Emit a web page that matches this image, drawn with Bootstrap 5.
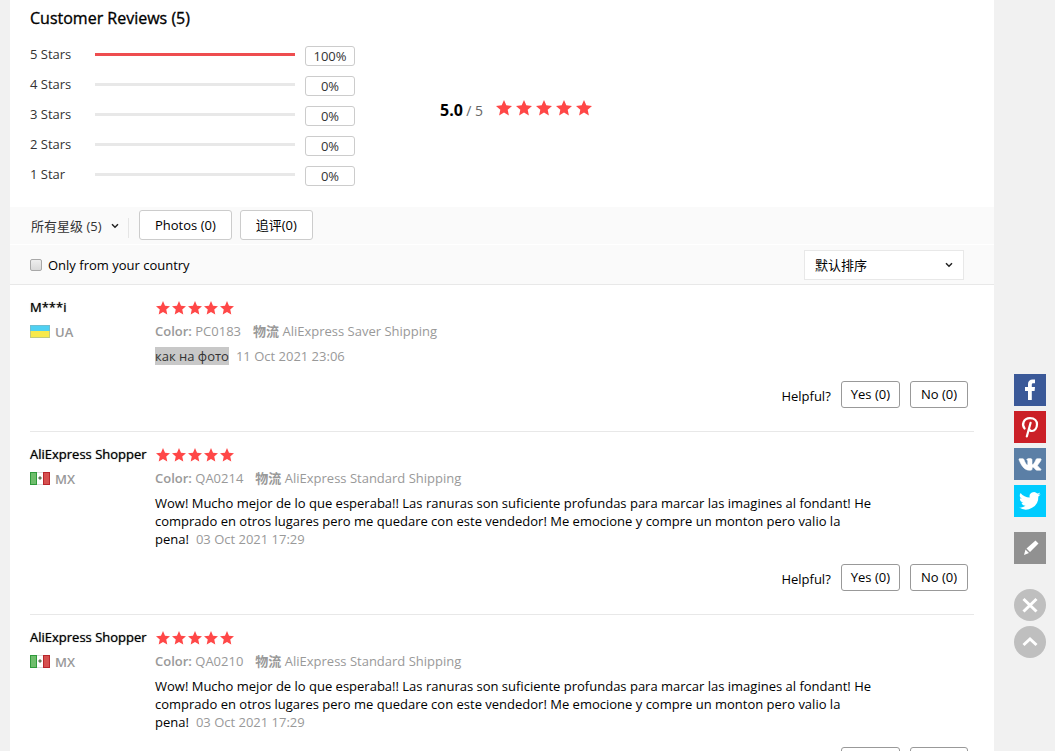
<!DOCTYPE html>
<html lang="en">
<head>
<meta charset="utf-8">
<meta name="viewport" content="width=device-width, initial-scale=1">
<title>Customer Reviews</title>
<link href="https://cdn.jsdelivr.net/npm/bootstrap@5.3.0/dist/css/bootstrap.min.css" rel="stylesheet">
<style>
  body { background: #f1f1f1; color: #000; font: 400 13px/18px "Open Sans", "Noto Sans CJK SC", sans-serif; }
  .page-wrap { padding: 0 61px 0 10px; }
  .reviews-title { font-size: 16px; line-height: 24px; font-weight: 400; -webkit-text-stroke: thin; padding-top: 6px; margin-bottom: 9px; }
  .summary { padding-bottom: 18px; }
  .rate-row { height: 30px; color: #333; }
  .rate-label { width: 65px; }
  .rate-bar { width: 200px; height: 3px; border-radius: 0; background: #e8e8e8; margin-right: 10px; }
  .rate-bar .progress-bar { background: #ee4d4f; }
  .rate-num { width: 50px; height: 20px; border: 1px solid #ccc; border-radius: 3px; margin-top: 4px; line-height: 19px; }
  .score { margin-left: 85px; padding-bottom: 12px; }
  .score-value { font-size: 16px; font-weight: 700; }
  .score-max { color: #666; font-size: 14px; margin-right: 1px; }
  .stars { display: block; fill: #ff4747; }
  .filters { background: #fafafa; border-bottom: 1px solid #e8e8e8; padding: 0 30px 0 20px; }
  .filter-top { height: 37px; padding-top: 3px; }
  .filter-bottom { height: 39px; }
  .filter-line { height: 1px; margin: 0 -30px 0 -20px; background: #fff; }
  .plain-select { appearance: none; border-radius: 0; color: #333; font-size: 13px;
    background: url("data:image/svg+xml,%3Csvg xmlns='http://www.w3.org/2000/svg' viewBox='0 0 8 6'%3E%3Cpath d='M1 1.2 4 4.2 7 1.2' fill='none' stroke='%23222' stroke-width='1.5'/%3E%3C/svg%3E") no-repeat right center / 8px 6px; }
  .star-select { width: 89px; height: 32px; border: 0; padding: 0 12px 0 1px; }
  .sort-select { width: 160px; height: 30px; border: 1px solid #e8e8e8; padding: 0 24px 0 10px; color: #000; background-color: #fff; background-position: right 10px center; }
  .split { width: 1px; height: 20px; background: #e5e5e5; margin: 0 10px 0 9px; }
  .filter-btn { height: 30px; padding: 0 15px; border: 1px solid #ccc; border-radius: 3px; background: #fff; font-size: 13px; line-height: 28px; color: #000; }
  .country-check { appearance: none; width: 12px; height: 12px; margin: 0 6px 0 0; border: 1px solid #a8a8a8; border-radius: 2px; background: linear-gradient(#eee, #d9d9d9); }
  .country-check:checked { background: #777; }
  .feedback { margin: 0 20px; padding: 15px 0 23px; border-bottom: 1px solid #e8e8e8; }
  .buyer { width: 125px; flex: none; }
  .buyer-name { line-height: 14px; font-weight: 500; text-shadow: 0 0 1px #555; white-space: nowrap; }
  .buyer-country { margin-top: 8px; color: #999; font-weight: 600; line-height: 20px; }
  .flag { margin-right: 5px; margin-bottom: 2px; }
  .star-line { height: 16px; padding: 1px 0 0 1px; }
  .meta { margin-top: 6px; color: #999; }
  .meta b { font-weight: 600; }
  .comment-text { margin: 7px 0 0; max-width: 719px; }
  .picked { background: #c8c8c8; color: #333; display: inline-block; }
  .date { color: #999; margin-left: 7px; }
  .helpful { margin-top: 16px; padding-right: 6px; gap: 10px; }
  .helpful span { padding-top: 2px; }
  .vote-btn { height: 27px; min-width: 58px; padding: 0 9px; border: 1px solid #999; border-radius: 3px; background: #fff; font-size: 13px; line-height: 25px; color: #000; }
  .share-bar { right: 9px; bottom: 93px; gap: 5px; }
  .share-bar a, .share-bar button { display: block; width: 32px; height: 32px; border: 0; padding: 0; }
  .share-bar svg { display: block; }
  .fb { background: #3b5998; } .pin { background: #cb2027; } .vk { background: #5b7fa6; } .tw { background: #00ccff; }
  .pen { background: #919191; margin: 10px 0 20px; }
  .round { border-radius: 50%; background: #bfbfbf; }
</style>
</head>
<body>
<svg class="d-none">
  <symbol id="star" viewBox="0 0 16 16"><path d="M8 0 10.300 5.300 16 5.900 11.700 9.700 12.900 15.500 8 12.500 3.100 15.500 4.300 9.700 0 5.900 5.700 5.300Z"/></symbol>
  <symbol id="mx" viewBox="0 0 20 13"><path fill="#fff" d="M0 0h20v13H0z"/><path fill="#2f9a3b" d="M0 0h7v13H0z"/><path fill="#6fbd6c" d="M1 1h5v11H1z"/><path fill="#b8262c" d="M13 0h7v13h-7z"/><path fill="#d6504f" d="M14 1h5v11h-5z"/><path fill="#62795a" d="M8.500 5.500 10 4l1.500 1.500v1L10 8 8.500 6.500z"/><path fill="#ddd" d="M7 0h6v1H7zM7 12h6v1H7z"/></symbol>
  <symbol id="ua" viewBox="0 0 20 13"><path fill="#4fd0f2" d="M0 0h20v6H0z"/><path fill="#f8e94c" d="M0 6h20v7H0z"/><path fill="none" stroke="#8cabb0" stroke-opacity=".5" d="M.5.5h19v12H.5z"/></symbol>
  <symbol id="stars-s" viewBox="0 0 78 14"><use href="#star" x="0" y="0" width="14" height="14"/><use href="#star" x="16" y="0" width="14" height="14"/><use href="#star" x="32" y="0" width="14" height="14"/><use href="#star" x="48" y="0" width="14" height="14"/><use href="#star" x="64" y="0" width="14" height="14"/></symbol>
</svg>

<div class="page-wrap">
<main class="bg-white">
  <section class="summary px-3 mx-1">
    <h1 class="reviews-title">Customer Reviews (5)</h1>
    <div class="d-flex align-items-center">
      <div>
        <div class="rate-row d-flex align-items-center"><span class="rate-label">5 Stars</span><div class="progress rate-bar"><div class="progress-bar" style="width:100%"></div></div><span class="rate-num text-center">100%</span></div>
        <div class="rate-row d-flex align-items-center"><span class="rate-label">4 Stars</span><div class="progress rate-bar"><div class="progress-bar" style="width:0%"></div></div><span class="rate-num text-center">0%</span></div>
        <div class="rate-row d-flex align-items-center"><span class="rate-label">3 Stars</span><div class="progress rate-bar"><div class="progress-bar" style="width:0%"></div></div><span class="rate-num text-center">0%</span></div>
        <div class="rate-row d-flex align-items-center"><span class="rate-label">2 Stars</span><div class="progress rate-bar"><div class="progress-bar" style="width:0%"></div></div><span class="rate-num text-center">0%</span></div>
        <div class="rate-row d-flex align-items-center"><span class="rate-label">1 Star</span><div class="progress rate-bar"><div class="progress-bar" style="width:0%"></div></div><span class="rate-num text-center">0%</span></div>
      </div>
      <div class="score d-flex align-items-center">
        <div class="pt-1"><span class="score-value">5.0</span> <span class="score-max">/ 5</span></div>
        <svg class="stars ms-2 ps-1" width="101" height="16" viewBox="0 0 97 16" role="img" aria-label="5 stars"><use href="#star" width="16" height="16"/><use href="#star" x="20" width="16" height="16"/><use href="#star" x="40" width="16" height="16"/><use href="#star" x="60" width="16" height="16"/><use href="#star" x="80" width="16" height="16"/></svg>
      </div>
    </div>
  </section>

  <section class="filters">
    <div class="filter-top d-flex align-items-start">
      <select class="plain-select star-select" aria-label="Star filter"><option>所有星级 (5)</option></select>
      <span class="split mt-2"></span>
      <button type="button" class="filter-btn">Photos (0)</button>
      <button type="button" class="filter-btn ms-2">追评(0)</button>
    </div>
    <div class="filter-line"></div>
    <div class="filter-bottom d-flex align-items-center justify-content-between">
      <div class="d-flex align-items-center"><input type="checkbox" class="country-check" id="country"><label for="country">Only from your country</label></div>
      <select class="plain-select sort-select" aria-label="Sort by"><option>默认排序</option></select>
    </div>
  </section>

  <article class="feedback d-flex">
    <div class="buyer">
      <div class="buyer-name">M***i</div>
      <div class="buyer-country d-flex align-items-center"><svg class="flag" width="20" height="13"><use href="#ua"/></svg>UA</div>
    </div>
    <div class="flex-grow-1">
      <div class="star-line"><svg class="stars" width="78" height="14" role="img" aria-label="5 stars"><use href="#stars-s"/></svg></div>
      <div class="meta"><span class="me-2 pe-1"><b>Color:</b> PC0183</span><span><b>物流</b> AliExpress Saver Shipping</span></div>
      <p class="comment-text"><span class="picked">как на фото</span><span class="date">11 Oct 2021 23:06</span></p>
      <div class="helpful d-flex justify-content-end align-items-center"><span>Helpful?</span><button type="button" class="vote-btn">Yes (0)</button><button type="button" class="vote-btn">No (0)</button></div>
    </div>
  </article>

  <article class="feedback d-flex">
    <div class="buyer">
      <div class="buyer-name">AliExpress Shopper</div>
      <div class="buyer-country d-flex align-items-center"><svg class="flag" width="20" height="13"><use href="#mx"/></svg>MX</div>
    </div>
    <div class="flex-grow-1">
      <div class="star-line"><svg class="stars" width="78" height="14" role="img" aria-label="5 stars"><use href="#stars-s"/></svg></div>
      <div class="meta"><span class="me-2 pe-1"><b>Color:</b> QA0214</span><span><b>物流</b> AliExpress Standard Shipping</span></div>
      <p class="comment-text">Wow! Mucho mejor de lo que esperaba!! Las ranuras son suficiente profundas para marcar las imagines al fondant! He comprado en otros lugares pero me quedare con este vendedor! Me emocione y compre un monton pero valio la pena!<span class="date">03 Oct 2021 17:29</span></p>
      <div class="helpful d-flex justify-content-end align-items-center"><span>Helpful?</span><button type="button" class="vote-btn">Yes (0)</button><button type="button" class="vote-btn">No (0)</button></div>
    </div>
  </article>

  <article class="feedback d-flex">
    <div class="buyer">
      <div class="buyer-name">AliExpress Shopper</div>
      <div class="buyer-country d-flex align-items-center"><svg class="flag" width="20" height="13"><use href="#mx"/></svg>MX</div>
    </div>
    <div class="flex-grow-1">
      <div class="star-line"><svg class="stars" width="78" height="14" role="img" aria-label="5 stars"><use href="#stars-s"/></svg></div>
      <div class="meta"><span class="me-2 pe-1"><b>Color:</b> QA0210</span><span><b>物流</b> AliExpress Standard Shipping</span></div>
      <p class="comment-text">Wow! Mucho mejor de lo que esperaba!! Las ranuras son suficiente profundas para marcar las imagines al fondant! He comprado en otros lugares pero me quedare con este vendedor! Me emocione y compre un monton pero valio la pena!<span class="date">03 Oct 2021 17:29</span></p>
      <div class="helpful d-flex justify-content-end align-items-center"><span>Helpful?</span><button type="button" class="vote-btn">Yes (0)</button><button type="button" class="vote-btn">No (0)</button></div>
    </div>
  </article>
</main>
</div>

<aside class="share-bar position-fixed d-flex flex-column">
  <a href="#" class="fb" aria-label="Facebook"><svg width="32" height="32"><path fill="#fff" d="M14 26V17h-3v-4h3v-3c0-3 2-4.500 4.500-4.500H21V9.300h-1.700c-1.200 0-1.500.6-1.500 1.500V13H21l-.4 4h-2.800v9z"/></svg></a>
  <a href="#" class="pin" aria-label="Pinterest"><svg width="32" height="32"><path fill="none" stroke="#fff" stroke-width="2.200" stroke-linecap="round" d="M10.600 17.500C7.500 14 9.300 7.200 16 7.200c4.800 0 7 2.900 7 6.100 0 4-2.400 6.700-5 6.700-1.500 0-2.600-.9-2.800-2M16.600 11.800 12.800 25.500"/></svg></a>
  <a href="#" class="vk" aria-label="VK"><svg width="32" height="32"><path fill="#fff" stroke="#fff" stroke-width=".6" d="M15.300 22.200C9.800 22.200 7 16.500 5 11.700c-.2-.6 0-1 .6-1h3.200c.6 0 .9.300 1.100.9.900 2.400 2 4.600 3 5.300.6.400.9 0 .9-.8v-2.700c0-1-.3-1.400-1.200-1.600.5-.9 1.500-1.200 2.700-1.200 2.300 0 2.700.4 2.700 1.600v3.600c0 .9.500 1 1 .6 1.200-1 2.300-3.100 3-4.900.2-.6.5-.8 1.100-.8h3.100c.9 0 1.100.4.9 1.100-.5 1.500-2 3.300-3.200 5-.5.7-.5 1 .1 1.600 1.200 1.100 2.400 2.200 2.900 3 .3.600 0 .8-.7.800h-3.500c-1.300 0-2.300-2.600-3.600-2.900-.7-.1-1 .4-1 1.500 0 1.100-.6 1.400-1.400 1.400z"/></svg></a>
  <a href="#" class="tw" aria-label="Twitter"><svg width="32" height="32"><path transform="translate(5 5) scale(.9)" fill="#fff" d="M24 4.600a10 10 0 0 1-2.800.8 5 5 0 0 0 2.200-2.700c-1 .6-2 1-3.100 1.200A4.900 4.900 0 0 0 11.900 8.400 14 14 0 0 1 1.700 3.200a4.900 4.900 0 0 0 1.500 6.600c-.8 0-1.600-.3-2.200-.6a4.900 4.900 0 0 0 3.900 4.900 5 5 0 0 1-2.200.1 4.900 4.900 0 0 0 4.600 3.400A9.900 9.900 0 0 1 0 19.500 14 14 0 0 0 21.500 7.100 10 10 0 0 0 24 4.600z"/></svg></a>
  <button type="button" class="pen" aria-label="Feedback"><svg width="32" height="32"><path fill="#fff" d="M21.500 8.500 24.500 11.500 16 20l-3.500-3.500zM11.500 17.500l3.500 3.500-5 2z"/></svg></button>
  <button type="button" class="round" aria-label="Close"><svg width="32" height="32"><path stroke="#fff" stroke-width="3" d="m9.500 10 13 12.500M22.500 10l-13 12.500"/></svg></button>
  <button type="button" class="round" aria-label="Back to top"><svg width="32" height="32"><path fill="none" stroke="#fff" stroke-width="3" d="m9.500 19 6.500-6 6.500 6"/></svg></button>
</aside>
<script src="https://cdn.jsdelivr.net/npm/bootstrap@5.3.0/dist/js/bootstrap.bundle.min.js"></script>
</body>
</html>
